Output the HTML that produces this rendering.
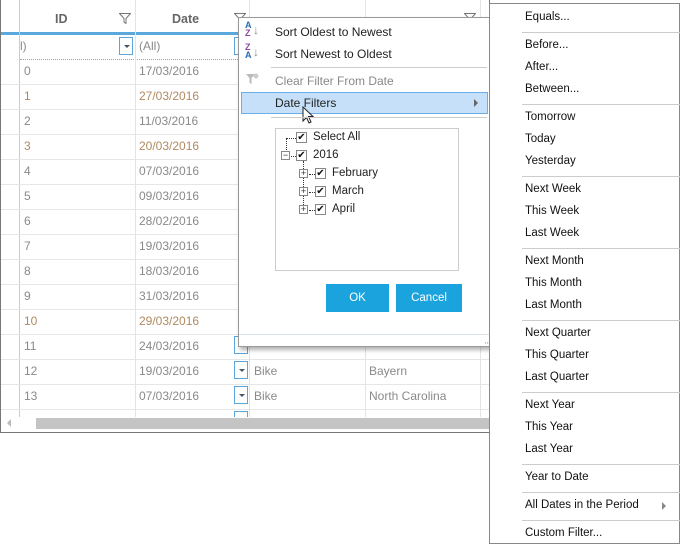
<!DOCTYPE html>
<html><head><meta charset="utf-8"><style>
*{margin:0;padding:0;box-sizing:border-box}
body{width:686px;height:545px;background:#fff;font-family:"Liberation Sans",sans-serif;font-size:12px;position:relative;overflow:hidden}
.abs{position:absolute}
.grid{left:0;top:0;width:490px;height:433px;border:1px solid #777;border-top:none;overflow:hidden;background:#fff}
.vl{position:absolute;top:0;width:1px;height:417px;background:#e4e4e4}
.hl{position:absolute;left:0;width:490px;height:1px;background:#e6e6e6}
.hd{position:absolute;top:12px;font-weight:bold;color:#666;font-size:12.5px}
.cell{position:absolute;color:#8a8a8a;font-size:12px}
.br{color:#b08a60}
.dd{position:absolute;width:14px;height:18px;border:1px solid #5aa6dd;background:#fff}
.dd:after{content:"";position:absolute;left:4px;top:7px;border-left:3px solid transparent;border-right:3px solid transparent;border-top:3px solid #456}
.fi{position:absolute;top:13px;width:12px;height:11px}
.pop{left:238px;top:17px;width:252px;height:330px;background:#fff;border:1px solid #999;box-shadow:2px 3px 4px rgba(0,0,0,.3)}
.mi{position:absolute;left:36px;font-size:12px;color:#222}
.sep{position:absolute;height:1px;background:#ccc}
.rm{left:489px;top:3px;width:191px;height:541px;background:#fff;border:1px solid #888}
.ri{position:absolute;left:35px;font-size:11.5px;color:#111}
.cb{position:absolute;width:11px;height:11px;border:1px solid #888;background:#fff;font-size:10px;line-height:9px;text-align:center;color:#111}
.pm{position:absolute;width:9px;height:9px;border:1px solid #888;font-size:9px;line-height:7px;text-align:center;color:#333;background:#fff}
.tl{position:absolute;font-size:11.5px;color:#222}
.btn{position:absolute;top:284px;height:28px;background:#1aa3dc;color:#fff;font-size:11.5px;text-align:center;line-height:28px}
</style></head><body>
<div class="abs grid">
  <div class="abs" style="left:0;top:32px;width:490px;height:3px;background:#5ba8dc"></div>
  <div class="abs" style="left:19px;top:59px;width:220px;border-top:1px dotted #8aa"></div>
  <div class="vl" style="left:18px;background:#ccc"></div>
  <div class="vl" style="left:134px"></div>
  <div class="vl" style="left:248px"></div>
  <div class="vl" style="left:364px"></div>
  <div class="vl" style="left:479px"></div>
  <div class="hd" style="left:54px">ID</div>
  <div class="hd" style="left:171px">Date</div>
  <svg class="fi" style="left:118px" viewBox="0 0 12 11"><path d="M0.5 0.5H11.5L7 5.5V10.5L5 9V5.5Z" fill="none" stroke="#777"/></svg>
  <svg class="fi" style="left:233px" viewBox="0 0 12 11"><path d="M0.5 0.5H11.5L7 5.5V10.5L5 9V5.5Z" fill="none" stroke="#777"/></svg>
  <svg class="fi" style="left:463px" viewBox="0 0 12 11"><path d="M0.5 0.5H11.5L7 5.5V10.5L5 9V5.5Z" fill="none" stroke="#777"/></svg>
  <div class="cell" style="left:19px;top:39px">l)</div>
  <div class="dd" style="left:118px;top:37px"></div>
  <div class="cell" style="left:138px;top:39px">(All)</div>
  <div class="dd" style="left:233px;top:37px"></div>
  <div class="hl" style="top:84px"></div><div class="hl" style="top:109px"></div><div class="hl" style="top:134px"></div><div class="hl" style="top:159px"></div><div class="hl" style="top:184px"></div><div class="hl" style="top:209px"></div><div class="hl" style="top:234px"></div><div class="hl" style="top:259px"></div><div class="hl" style="top:284px"></div><div class="hl" style="top:309px"></div><div class="hl" style="top:334px"></div><div class="hl" style="top:359px"></div><div class="hl" style="top:384px"></div><div class="hl" style="top:409px"></div>
  <div class="dd" style="left:233px;top:336px"></div>
  <div class="cell" style="left:23px;top:64px">0</div><div class="cell" style="left:138px;top:64px">17/03/2016</div>
  <div class="cell br" style="left:23px;top:89px">1</div><div class="cell br" style="left:138px;top:89px">27/03/2016</div>
  <div class="cell" style="left:23px;top:114px">2</div><div class="cell" style="left:138px;top:114px">11/03/2016</div>
  <div class="cell br" style="left:23px;top:139px">3</div><div class="cell br" style="left:138px;top:139px">20/03/2016</div>
  <div class="cell" style="left:23px;top:164px">4</div><div class="cell" style="left:138px;top:164px">07/03/2016</div>
  <div class="cell" style="left:23px;top:189px">5</div><div class="cell" style="left:138px;top:189px">09/03/2016</div>
  <div class="cell" style="left:23px;top:214px">6</div><div class="cell" style="left:138px;top:214px">28/02/2016</div>
  <div class="cell" style="left:23px;top:239px">7</div><div class="cell" style="left:138px;top:239px">19/03/2016</div>
  <div class="cell" style="left:23px;top:264px">8</div><div class="cell" style="left:138px;top:264px">18/03/2016</div>
  <div class="cell" style="left:23px;top:289px">9</div><div class="cell" style="left:138px;top:289px">31/03/2016</div>
  <div class="cell br" style="left:23px;top:314px">10</div><div class="cell br" style="left:138px;top:314px">29/03/2016</div>
  <div class="cell" style="left:23px;top:339px">11</div><div class="cell" style="left:138px;top:339px">24/03/2016</div>
  <div class="cell" style="left:23px;top:364px">12</div><div class="cell" style="left:138px;top:364px">19/03/2016</div>
  <div class="cell" style="left:23px;top:389px">13</div><div class="cell" style="left:138px;top:389px">07/03/2016</div>
  <div class="dd" style="left:233px;top:361px"></div><div class="dd" style="left:233px;top:386px"></div>
  <div class="dd" style="left:233px;top:411px;height:8px"></div>
  <div class="cell" style="left:253px;top:364px">Bike</div><div class="cell" style="left:368px;top:364px">Bayern</div>
  <div class="cell" style="left:253px;top:389px">Bike</div><div class="cell" style="left:368px;top:389px">North Carolina</div>
  <div class="abs" style="left:0;top:417px;width:490px;height:15px;background:#fff"></div>
  <div class="abs" style="left:35px;top:418px;width:455px;height:11px;background:#c4c4c4"></div>
  <div class="abs" style="left:6px;top:419px;border-top:4px solid transparent;border-bottom:4px solid transparent;border-right:4px solid #bbb"></div>
</div>

<div class="abs pop">
  <div class="abs" style="left:6px;top:3px;font-size:9px;line-height:8px;font-weight:bold"><span style="color:#2a6ab0">A</span><br><span style="color:#8a4aa0">Z</span></div>
  <div class="abs" style="left:14px;top:5px;color:#888;font-size:12px">↓</div>
  <div class="abs" style="left:6px;top:25px;font-size:9px;line-height:8px;font-weight:bold"><span style="color:#8a4aa0">Z</span><br><span style="color:#2a6ab0">A</span></div>
  <div class="abs" style="left:14px;top:27px;color:#888;font-size:12px">↓</div>
  <div class="mi" style="top:7px">Sort Oldest to Newest</div>
  <div class="mi" style="top:29px">Sort Newest to Oldest</div>
  <div class="sep" style="left:32px;top:49px;width:216px"></div>
  <svg class="abs" style="left:6px;top:55px" width="14" height="13" viewBox="0 0 14 13"><path d="M1 1H10L6.5 5V11L4.5 10V5Z" fill="#bbb"/><circle cx="11" cy="3" r="2.5" fill="#ccc"/></svg>
  <div class="mi" style="top:56px;color:#888">Clear Filter From Date</div>
  <div class="abs" style="left:2px;top:74px;width:247px;height:22px;background:#c5e0f8;border:1px solid #6caee8"></div>
  <div class="mi" style="top:78px">Date Filters</div>
  <div class="abs" style="left:235px;top:81px;border-top:4px solid transparent;border-bottom:4px solid transparent;border-left:4px solid #666"></div>
  <svg class="abs" style="left:63px;top:88px" width="12" height="18" viewBox="0 0 12 18"><path d="M1 1V15L4.5 11.5L7 17L9 16L6.5 10.5H11Z" fill="#fff" stroke="#222" stroke-width="1"/></svg>
  <div class="sep" style="left:32px;top:99px;width:216px"></div>
  <div class="abs" style="left:36px;top:110px;width:184px;height:143px;border:1px solid #ccc"></div>
  <div class="abs" style="left:47px;top:120px;width:10px;border-top:1px dotted #333"></div>
  <div class="abs" style="left:47px;top:120px;height:14px;border-left:1px dotted #333"></div>
  <div class="cb" style="left:57px;top:114px">✔</div><div class="tl" style="left:74px;top:113px">Select All</div>
  <div class="pm" style="left:42px;top:133px">−</div>
  <div class="abs" style="left:52px;top:138px;width:5px;border-top:1px dotted #333"></div>
  <div class="cb" style="left:57px;top:132px">✔</div><div class="tl" style="left:74px;top:131px">2016</div>
  <div class="abs" style="left:64px;top:143px;height:50px;border-left:1px dotted #333"></div>
  <div class="pm" style="left:60px;top:151px">+</div><div class="abs" style="left:70px;top:156px;width:6px;border-top:1px dotted #333"></div>
  <div class="cb" style="left:76px;top:150px">✔</div><div class="tl" style="left:93px;top:149px">February</div>
  <div class="pm" style="left:60px;top:169px">+</div><div class="abs" style="left:70px;top:174px;width:6px;border-top:1px dotted #333"></div>
  <div class="cb" style="left:76px;top:168px">✔</div><div class="tl" style="left:93px;top:167px">March</div>
  <div class="pm" style="left:60px;top:187px">+</div><div class="abs" style="left:70px;top:192px;width:6px;border-top:1px dotted #333"></div>
  <div class="cb" style="left:76px;top:186px">✔</div><div class="tl" style="left:93px;top:185px">April</div>
  <div class="btn" style="left:87px;top:266px;width:63px">OK</div>
  <div class="btn" style="left:157px;top:266px;width:66px">Cancel</div>
  <div class="abs" style="left:0;top:316px;width:250px;height:1px;background:#dde3ea"></div>
  <div class="abs" style="left:243px;top:320px;font-size:7px;color:#888;letter-spacing:-1px">⠠⠴</div>
</div>

<div class="abs rm">
  <div class="ri" style="top:7px">Equals...</div>
  <div class="sep" style="left:32px;top:28px;width:158px"></div>
  <div class="ri" style="top:35px">Before...</div>
  <div class="ri" style="top:57px">After...</div>
  <div class="ri" style="top:79px">Between...</div>
  <div class="sep" style="left:32px;top:100px;width:158px"></div>
  <div class="ri" style="top:107px">Tomorrow</div>
  <div class="ri" style="top:129px">Today</div>
  <div class="ri" style="top:151px">Yesterday</div>
  <div class="sep" style="left:32px;top:172px;width:158px"></div>
  <div class="ri" style="top:179px">Next Week</div>
  <div class="ri" style="top:201px">This Week</div>
  <div class="ri" style="top:223px">Last Week</div>
  <div class="sep" style="left:32px;top:244px;width:158px"></div>
  <div class="ri" style="top:251px">Next Month</div>
  <div class="ri" style="top:273px">This Month</div>
  <div class="ri" style="top:295px">Last Month</div>
  <div class="sep" style="left:32px;top:316px;width:158px"></div>
  <div class="ri" style="top:323px">Next Quarter</div>
  <div class="ri" style="top:345px">This Quarter</div>
  <div class="ri" style="top:367px">Last Quarter</div>
  <div class="sep" style="left:32px;top:388px;width:158px"></div>
  <div class="ri" style="top:395px">Next Year</div>
  <div class="ri" style="top:417px">This Year</div>
  <div class="ri" style="top:439px">Last Year</div>
  <div class="sep" style="left:32px;top:460px;width:158px"></div>
  <div class="ri" style="top:467px">Year to Date</div>
  <div class="sep" style="left:32px;top:488px;width:158px"></div>
  <div class="ri" style="top:495px">All Dates in the Period</div>
  <div class="abs" style="left:172px;top:498px;border-top:4px solid transparent;border-bottom:4px solid transparent;border-left:4px solid #888"></div>
  <div class="sep" style="left:32px;top:516px;width:158px"></div>
  <div class="ri" style="top:523px">Custom Filter...</div>
</div>
</body></html>
